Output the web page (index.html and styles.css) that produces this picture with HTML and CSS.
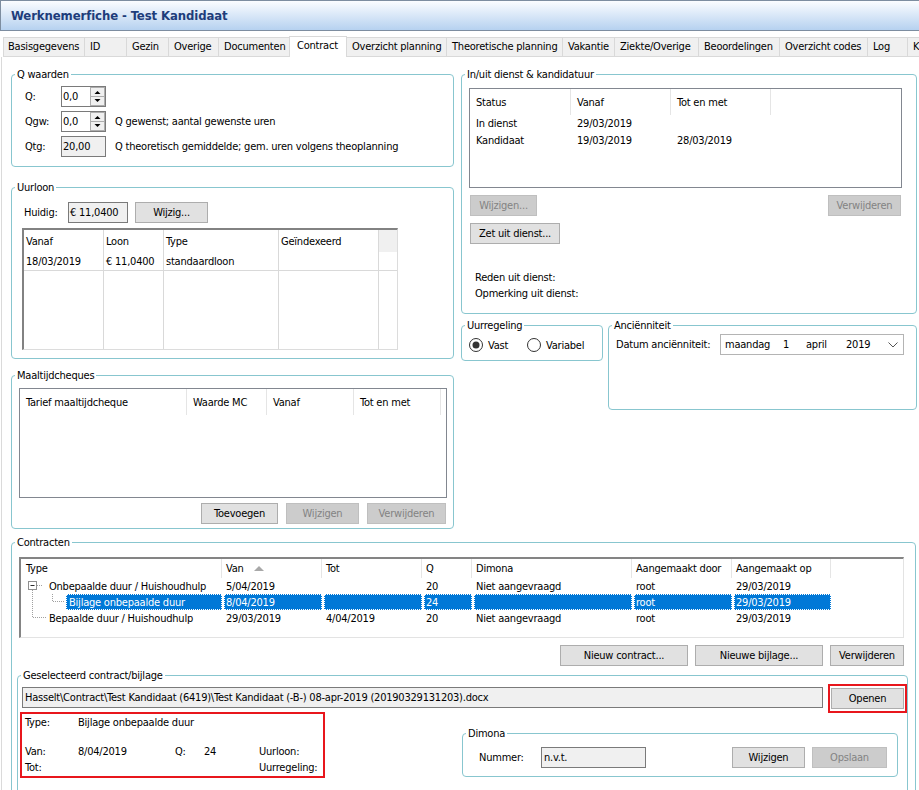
FILE: index.html
```html
<!DOCTYPE html>
<html>
<head>
<meta charset="utf-8">
<title>Werknemerfiche - Test Kandidaat</title>
<link rel="stylesheet" href="styles.css">
</head>
<body>
<div class="window">
  <div class="titlebar"><span class="title">Werknemerfiche - Test Kandidaat</span></div>
  <div class="tabs">
    <div class="tab t-basis">Basisgegevens</div>
    <div class="tab t-id">ID</div>
    <div class="tab t-gezin">Gezin</div>
    <div class="tab t-overige">Overige</div>
    <div class="tab t-doc">Documenten</div>
    <div class="tab active t-contract">Contract</div>
    <div class="tab t-ovp">Overzicht planning</div>
    <div class="tab t-theo">Theoretische planning</div>
    <div class="tab t-vak">Vakantie</div>
    <div class="tab t-ziekte">Ziekte/Overige</div>
    <div class="tab t-beo">Beoordelingen</div>
    <div class="tab t-codes">Overzicht codes</div>
    <div class="tab t-log">Log</div>
    <div class="tab t-k">K</div>
  </div>

  <div class="panel">
    <div class="toprow">
      <div class="colL">
        <div class="group gq">
          <div class="gt">Q waarden</div>
          <div class="qrows">
            <div class="qrow">
              <span class="ql">Q:</span>
              <div class="spin"><span class="sv">0,0</span>
                <svg class="spinsvg" width="15" height="19" viewBox="0 0 15 19"><rect x="0.5" y="0.5" width="14" height="18" fill="#f0f0f0" stroke="#adadad"/><path d="M0 9.5H15" stroke="#adadad"/><path d="M4.5 7H10.5L7.5 4Z" fill="#000"/><path d="M4.5 12H10.5L7.5 15Z" fill="#000"/></svg>
              </div>
            </div>
            <div class="qrow">
              <span class="ql">Qgw:</span>
              <div class="spin"><span class="sv">0,0</span>
                <svg class="spinsvg" width="15" height="19" viewBox="0 0 15 19"><rect x="0.5" y="0.5" width="14" height="18" fill="#f0f0f0" stroke="#adadad"/><path d="M0 9.5H15" stroke="#adadad"/><path d="M4.5 7H10.5L7.5 4Z" fill="#000"/><path d="M4.5 12H10.5L7.5 15Z" fill="#000"/></svg>
              </div>
              <span class="qd">Q gewenst; aantal gewenste uren</span>
            </div>
            <div class="qrow">
              <span class="ql">Qtg:</span>
              <div class="tb tb-q">20,00</div>
              <span class="qd">Q theoretisch gemiddelde; gem. uren volgens theoplanning</span>
            </div>
          </div>
        </div>

        <div class="group gl">
          <div class="gt">Uurloon</div>
          <div class="lrow">
            <span class="lab">Huidig:</span>
            <div class="tb tb-loon">€ 11,0400</div>
            <div class="btn b-wijzig">Wijzig...</div>
          </div>
          <div class="dg">
            <div class="dh">Vanaf</div>
            <div class="dh">Loon</div>
            <div class="dh">Type</div>
            <div class="dh">Geïndexeerd</div>
            <div class="dh dh5"></div>
            <div class="dd">18/03/2019</div>
            <div class="dd">€ 11,0400</div>
            <div class="dd">standaardloon</div>
            <div class="dd"></div>
            <div class="dd dd5"></div>
            <div class="df"></div>
            <div class="df"></div>
            <div class="df"></div>
            <div class="df"></div>
            <div class="df df5"></div>
          </div>
        </div>

        <div class="group gm">
          <div class="gt">Maaltijdcheques</div>
          <div class="lv lv-mc">
            <div class="lvh lvh-mc">
              <div>Tarief maaltijdcheque</div>
              <div>Waarde MC</div>
              <div>Vanaf</div>
              <div>Tot en met</div>
            </div>
          </div>
          <div class="brow brow-mc">
            <div class="btn w77">Toevoegen</div>
            <div class="btn dis w73">Wijzigen</div>
            <div class="btn dis w79">Verwijderen</div>
          </div>
        </div>
      </div>

      <div class="colR">
        <div class="group gd">
          <div class="gt">In/uit dienst &amp; kandidatuur</div>
          <div class="lv lv-d">
            <div class="lvh lvh-d">
              <div>Status</div>
              <div>Vanaf</div>
              <div>Tot en met</div>
            </div>
            <div class="lvr lvh-d">
              <div>In dienst</div>
              <div>29/03/2019</div>
              <div></div>
            </div>
            <div class="lvr lvh-d">
              <div>Kandidaat</div>
              <div>19/03/2019</div>
              <div>28/03/2019</div>
            </div>
          </div>
          <div class="brow brow-d">
            <div class="btn dis w67">Wijzigen...</div>
            <div class="btn dis w73">Verwijderen</div>
          </div>
          <div class="btn b-zet">Zet uit dienst...</div>
          <div class="reden">
            <div>Reden uit dienst:</div>
            <div>Opmerking uit dienst:</div>
          </div>
        </div>

        <div class="urrow">
          <div class="group gu">
            <div class="gt">Uurregeling</div>
            <div class="radios">
              <div class="radio r1">
                <svg width="14" height="14" viewBox="0 0 14 14"><circle cx="7" cy="7" r="6.5" fill="#fff" stroke="#333"/><circle cx="7" cy="7" r="3.5" fill="#333"/></svg>
                <span>Vast</span>
              </div>
              <div class="radio">
                <svg width="14" height="14" viewBox="0 0 14 14"><circle cx="7" cy="7" r="6.5" fill="#fff" stroke="#333"/></svg>
                <span>Variabel</span>
              </div>
            </div>
          </div>
          <div class="group ga">
            <div class="gt">Anciënniteit</div>
            <div class="arow">
              <span class="alab">Datum anciënniteit:</span>
              <div class="dp">
                <span class="d1">maandag</span><span class="d2">1</span><span class="d3">april</span><span class="d4">2019</span>
                <svg class="chev" width="10" height="6" viewBox="0 0 10 6"><path d="M0.5 0.5L5 5L9.5 0.5" fill="none" stroke="#555"/></svg>
              </div>
            </div>
          </div>
        </div>
      </div>
    </div>

    <div class="group gc">
      <div class="gt">Contracten</div>
      <div class="lv-c">
        <div class="ch">
          <div>Type</div>
          <div>Van<svg class="sort" width="10" height="5" viewBox="0 0 10 5"><path d="M0 5L5 0L10 5Z" fill="#a8a8a8"/></svg></div>
          <div>Tot</div>
          <div>Q</div>
          <div>Dimona</div>
          <div>Aangemaakt door</div>
          <div>Aangemaakt op</div>
          <div></div>
        </div>
        <div class="cr">
          <div class="c1"><svg class="tree" width="28" height="16" viewBox="0 0 28 16"><path d="M16 7.5H22" stroke="#a0a0a0" stroke-dasharray="1 1"/><path d="M11.5 12V16" stroke="#a0a0a0" stroke-dasharray="1 1"/><rect x="7.5" y="3.5" width="8" height="8" fill="#fff" stroke="#8f8f8f"/><path d="M9.5 7.5H13.5" stroke="#2b2b2b"/></svg>Onbepaalde duur / Huishoudhulp</div>
          <div>5/04/2019</div>
          <div></div>
          <div>20</div>
          <div>Niet aangevraagd</div>
          <div>root</div>
          <div>29/03/2019</div>
          <div></div>
        </div>
        <div class="cr sel">
          <div class="c1"><svg class="tree" width="45" height="16" viewBox="0 0 45 16"><path d="M11.5 0V16" stroke="#a0a0a0" stroke-dasharray="1 1"/><path d="M31.5 0V7.5" stroke="#a0a0a0" stroke-dasharray="1 1"/><path d="M32 7.5H44" stroke="#a0a0a0" stroke-dasharray="1 1"/></svg><span class="hl hl1">Bijlage onbepaalde duur</span></div>
          <div><span class="hl">8/04/2019</span></div>
          <div><span class="hl"></span></div>
          <div><span class="hl">24</span></div>
          <div><span class="hl"></span></div>
          <div><span class="hl">root</span></div>
          <div><span class="hl">29/03/2019</span></div>
          <div></div>
        </div>
        <div class="cr">
          <div class="c1"><svg class="tree" width="28" height="16" viewBox="0 0 28 16"><path d="M11.5 0V7.5" stroke="#a0a0a0" stroke-dasharray="1 1"/><path d="M12 7.5H26" stroke="#a0a0a0" stroke-dasharray="1 1"/></svg>Bepaalde duur / Huishoudhulp</div>
          <div>29/03/2019</div>
          <div>4/04/2019</div>
          <div>20</div>
          <div>Niet aangevraagd</div>
          <div>root</div>
          <div>29/03/2019</div>
          <div></div>
        </div>
      </div>
      <div class="brow brow-c">
        <div class="btn w128">Nieuw contract...</div>
        <div class="btn w128">Nieuwe bijlage...</div>
        <div class="btn w74">Verwijderen</div>
      </div>

      <div class="group gs">
        <div class="gt">Geselecteerd contract/bijlage</div>
        <div class="prow">
          <div class="tb tb-path">Hasselt\Contract\Test Kandidaat (6419)\Test Kandidaat (-B-) 08-apr-2019 (20190329131203).docx</div>
          <div class="redbtn"><div class="btn w73">Openen</div></div>
        </div>
        <div class="lower">
          <div class="redinfo">
            <div class="ri r-a"><span class="w53">Type:</span><span>Bijlage onbepaalde duur</span></div>
            <div class="ri r-b"><span class="w53">Van:</span><span class="w97">8/04/2019</span><span class="w29">Q:</span><span class="w55">24</span><span>Uurloon:</span></div>
            <div class="ri r-c"><span class="w53">Tot:</span><span class="w181"></span><span>Uurregeling:</span></div>
          </div>
          <div class="group gdim">
            <div class="gt">Dimona</div>
            <div class="drow">
              <span class="nlab">Nummer:</span>
              <div class="tb tb-num">n.v.t.</div>
              <div class="btn w73 b-dw">Wijzigen</div>
              <div class="btn dis w75">Opslaan</div>
            </div>
          </div>
        </div>
      </div>
    </div>
  </div>
</div>
</body>
</html>
```

FILE: styles.css
```css
* { box-sizing: border-box; }
html, body { margin: 0; padding: 0; background: #fff; }
body {
  width: 919px;
  height: 790px;
  overflow: hidden;
  font-family: "DejaVu Sans Condensed", "DejaVu Sans", sans-serif;
  font-size: 11px;
  line-height: 13px;
  letter-spacing: -0.22px;
  color: #000;
}
.window { width: 919px; }

/* title bar */
.titlebar {
  height: 31px;
  border: 1px solid #7d8da0;
  border-right: none;
  background: linear-gradient(#fbfdff, #b6d1f0);
  display: flex;
  align-items: center;
  padding-left: 10px;
}
.title { font-weight: bold; font-size: 13px; letter-spacing: -0.1px; color: #1e3d7b; }

/* tabs */
.tabs {
  display: flex;
  align-items: flex-end;
  margin-top: 5px;
  padding-left: 3px;
  height: 21px;
  white-space: nowrap;
  overflow: hidden;
}
.tab {
  flex: none;
  height: 20px;
  background: #f0f0f0;
  border: 1px solid #d9d9d9;
  margin-right: -1px;
  padding-left: 5px;
  line-height: 18px;
}
.tab.active {
  height: 21px;
  background: #fff;
  border-bottom: none;
  padding-left: 7px;
  position: relative;
  z-index: 1;
}
.t-basis { width: 82px; padding-left: 4px; }
.t-id { width: 43px; }
.t-gezin { width: 43px; }
.t-overige { width: 51px; }
.t-doc { width: 72px; }
.t-contract { width: 58px; }
.t-ovp { width: 101px; }
.t-theo { width: 117px; }
.t-vak { width: 53px; }
.t-ziekte { width: 85px; }
.t-beo { width: 82px; }
.t-codes { width: 89px; }
.t-log { width: 41px; }
.t-k { width: 60px; }

/* panel */
.panel {
  margin-left: 1px;
  border-left: 1px solid #dadada;
  padding: 17px 0 0 9px;
  height: 733px;
}
.toprow { display: flex; gap: 7px; align-items: flex-start; }
.colL { width: 443px; display: flex; flex-direction: column; flex: none; }
.colR { width: 456px; flex: none; }

/* group boxes */
.group {
  border: 1px solid #88c6cf;
  border-radius: 4px;
  background: #fff;
  flex: none;
}
.gt {
  width: max-content;
  height: 13px;
  margin: -7px 0 0 3px;
  padding: 0 2px;
  background: #fff;
  line-height: 13px;
}

/* inputs */
.tb {
  height: 21px;
  border: 1px solid #7a7a7a;
  background: #f0f0f0;
  padding-left: 1px;
  display: flex;
  align-items: center;
  white-space: nowrap;
  overflow: hidden;
  flex: none;
}
.btn {
  height: 21px;
  border: 1px solid #adadad;
  background: #e1e1e1;
  display: flex;
  align-items: center;
  justify-content: center;
  flex: none;
  white-space: nowrap;
}
.btn.dis { background: #cccccc; border-color: #bfbfbf; color: #838383; }
.w67 { width: 67px; }
.w73 { width: 73px; }
.w74 { width: 74px; }
.w75 { width: 75px; }
.w77 { width: 77px; }
.w79 { width: 79px; }
.w128 { width: 128px; }

/* Q waarden */
.gq { height: 93px; }
.qrows { margin-top: 5px; padding-left: 13px; display: flex; flex-direction: column; gap: 4px; }
.qrow { display: flex; align-items: center; height: 21px; }
.ql { width: 36px; flex: none; }
.spin {
  width: 45px;
  height: 21px;
  border: 1px solid #7a7a7a;
  background: #fff;
  display: flex;
  align-items: center;
  flex: none;
}
.sv { flex: 1; padding-left: 1px; }
.spinsvg { display: block; }
.tb-q { width: 45px; }
.qd { margin-left: 9px; white-space: nowrap; }

/* Uurloon */
.gl { height: 172px; margin-top: 20px; }
.lrow { display: flex; align-items: center; height: 21px; margin-top: 8px; padding-left: 12px; }
.lab { width: 44px; flex: none; }
.tb-loon { width: 60px; }
.b-wijzig { width: 73px; margin-left: 7px; }
.dg {
  margin: 5px 0 0 10px;
  width: 376px;
  height: 122px;
  border-top: 2px solid #828282;
  border-left: 2px solid #828282;
  border-right: 1px solid #dcdcdc;
  border-bottom: 1px solid #dcdcdc;
  display: grid;
  grid-template-columns: 80px 60px 115px 100px 18px;
  grid-template-rows: 22px 19px 1fr;
}
.dg > div {
  border-right: 1px solid #d9d9d9;
  padding-left: 2px;
  display: flex;
  align-items: center;
  white-space: nowrap;
}
.dg .dd { border-bottom: 1px solid #d9d9d9; }
.dg .dh5 { background: #f0f0f0; border-right: none; }
.dg .dd5, .dg .df5 { border-right: none; }

/* list views */
.lv { border: 1px solid #828790; background: #fff; flex: none; }
.lvh { display: grid; height: 26px; }
.lvh > div, .lvr > div {
  padding-left: 6px;
  display: flex;
  align-items: center;
  white-space: nowrap;
}
.lvh > div { border-right: 1px solid #e5e5e5; }
.lvr { display: grid; height: 17px; }
.lvr > div { border-right: none; }
.lvh-mc { grid-template-columns: 167px 80px 87px 87px; }
.lvh-d { grid-template-columns: 101px 100px 100px; }

.brow { display: flex; justify-content: flex-end; }

/* Maaltijdcheques */
.gm { height: 154px; margin-top: 16px; }
.lv-mc { margin: 6px 0 0 7px; width: 428px; height: 110px; }
.brow-mc { margin-top: 5px; padding-right: 7px; gap: 8px; }

/* In/uit dienst */
.gd { height: 240px; }
.lv-d { margin: 7px 0 0 7px; width: 433px; height: 100px; }
.brow-d { margin-top: 7px; padding: 0 15px 0 8px; justify-content: space-between; }
.b-zet { margin: 7px 0 0 8px; width: 90px; }
.reden { margin-top: 26px; padding-left: 13px; line-height: 16px; }

/* Uurregeling / Anciënniteit */
.urrow { display: flex; align-items: flex-start; margin-top: 11px; }
.gu { width: 142px; height: 36px; }
.radios { display: flex; align-items: center; height: 14px; margin-top: 6px; padding-left: 7px; }
.radio { display: flex; align-items: center; gap: 5px; }
.radio svg { display: block; flex: none; }
.r1 { width: 58px; }
.ga { width: 309px; height: 85px; margin-left: 5px; }
.arow { display: flex; align-items: center; height: 21px; margin-top: 2px; padding-left: 7px; }
.alab { width: 104px; flex: none; }
.dp {
  width: 184px;
  height: 21px;
  border: 1px solid #b4b4b4;
  display: flex;
  align-items: center;
  padding-left: 4px;
  flex: none;
}
.d1 { width: 58px; }
.d2 { width: 23px; }
.d3 { width: 40px; }
.d4 { flex: 1; }
.chev { display: block; margin-right: 5px; }

/* Contracten */
.gc { width: 905px; height: 300px; margin-top: 13px; }
.lv-c {
  margin: 8px 0 0 7px;
  width: 885px;
  height: 81px;
  border-top: 2px solid #848484;
  border-left: 2px solid #848484;
  border-right: 1px solid #e3e3e3;
  border-bottom: 1px solid #e3e3e3;
  background: #fff;
}
.ch, .cr {
  display: grid;
  grid-template-columns: 201px 100px 100px 50px 160px 100px 99px 1fr;
}
.ch { height: 19px; }
.ch > div {
  border-right: 1px solid #e5e5e5;
  padding-left: 4px;
  display: flex;
  align-items: center;
  white-space: nowrap;
}
.ch > div:first-child { padding-left: 5px; }
.ch > div:last-child { border-right: none; }
.sort { display: block; margin-left: 10px; }
.cr { height: 16px; }
.cr > div {
  padding-left: 4px;
  display: flex;
  align-items: center;
  white-space: nowrap;
  overflow: hidden;
}
.cr > .c1 { padding-left: 0; }
.tree { display: block; flex: none; }
.cr.sel > div { padding-left: 2px; }
.cr.sel > .c1 { padding-left: 0; }
.hl {
  flex: 1;
  align-self: stretch;
  display: flex;
  align-items: center;
  background: #0078d7;
  color: #fff;
  border: 1px dotted #ffffff;
  padding-left: 1px;
}
.hl1 { padding-left: 2px; }
.brow-c { margin-top: 7px; padding-right: 11px; gap: 7px; }

/* Geselecteerd contract/bijlage */
.gs { width: 891px; height: 200px; margin: 9px 0 0 5px; }
.prow { display: flex; align-items: center; margin: 5px 0 0 4px; }
.tb-path { width: 801px; padding-left: 2px; }
.redbtn {
  border: 2px solid #e8161c;
  padding: 2px 1px;
  margin: -3px 0 -5px 5px;
  flex: none;
}
.lower { display: flex; align-items: flex-start; margin-top: 4px; }
.redinfo {
  width: 305px;
  height: 66px;
  border: 2px solid #e8161c;
  margin-left: 2px;
  padding-left: 3px;
  flex: none;
}
.ri { display: flex; align-items: center; white-space: nowrap; }
.r-a { height: 16px; margin-bottom: 13px; }
.r-b { height: 16px; }
.r-c { height: 17px; }
.w53 { width: 53px; flex: none; }
.w97 { width: 97px; flex: none; }
.w29 { width: 29px; flex: none; }
.w55 { width: 55px; flex: none; }
.w181 { width: 181px; flex: none; }
.gdim { width: 436px; height: 44px; margin: 21px 0 0 137px; }
.drow { display: flex; align-items: center; margin-top: 7px; padding: 0 10px 0 16px; }
.nlab { width: 62px; flex: none; }
.tb-num { width: 105px; padding-left: 2px; }
.b-dw { margin-left: auto; margin-right: 7px; }
```
